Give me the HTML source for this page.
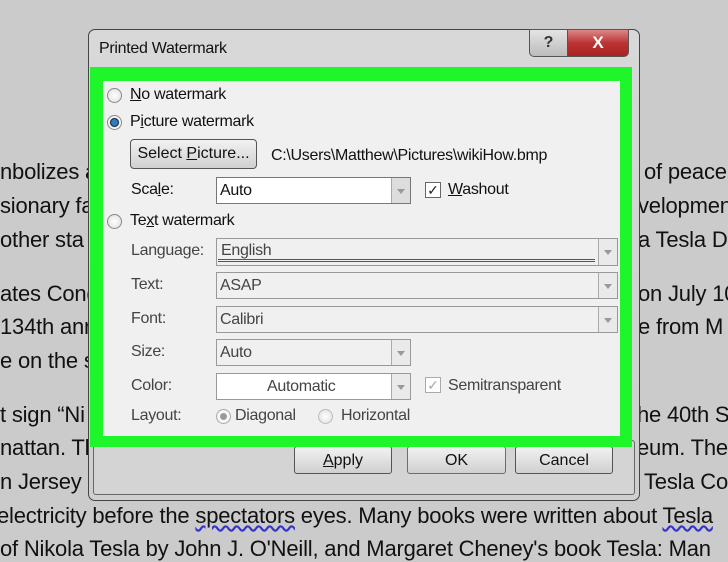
<!DOCTYPE html>
<html><head><meta charset="utf-8"><style>
*{margin:0;padding:0;box-sizing:border-box}
body{width:728px;height:546px;overflow:hidden;background:#cbcbcb;position:relative;font-family:"Liberation Sans",sans-serif;color:#111}
.bl{position:absolute;font-size:22px;white-space:nowrap;letter-spacing:-0.2px;line-height:26px;left:0}
.R{left:644px}
.dlg{position:absolute;left:88px;top:29px;width:552px;height:472px;border:1px solid #444;border-radius:7px;background:linear-gradient(#d8d8d8,#cfcfcf)}
.t{position:absolute;font-size:16px;white-space:nowrap;color:#111;letter-spacing:-0.3px}
.g{position:absolute;left:90px;top:67px;width:542px;height:380px;background:#1ff52b}
.pan{position:absolute;left:103px;top:81px;width:517px;height:355px;background:#f0f0f0}
.rad{position:absolute;width:15px;height:15px;border-radius:50%;border:1px solid #888;background:radial-gradient(#fff,#ddd)}
.cb{position:absolute;width:16px;height:16px;border:1px solid #666;background:#fff;font-size:14px;line-height:14px;text-align:center;color:#223}
.combo{position:absolute;border:1px solid #999;background:#f0f0f0}
.arr{position:absolute;right:0;top:0;bottom:0;width:19px;border-left:1px solid #aaa;background:#eaeaea}
.arr:after{content:"";position:absolute;left:5px;top:50%;margin-top:-2px;border-left:4px solid transparent;border-right:4px solid transparent;border-top:5px solid #999}
.btn{position:absolute;border:1px solid #555;border-radius:3px;background:linear-gradient(#f2f2f2,#d0d0d0);font-size:16px;text-align:center}
u{text-decoration:underline}
</style></head><body>
<div class="bl" style="top:159px">nbolizes a</div>
<div class="bl" style="top:193px">sionary fa</div>
<div class="bl" style="top:227px">other sta</div>
<div class="bl" style="top:281px">ates Cong</div>
<div class="bl" style="top:314px">134th ann</div>
<div class="bl" style="top:348px">e on the s</div>
<div class="bl" style="top:402px">t sign “Ni</div>
<div class="bl" style="top:435px">nattan. Th</div>
<div class="bl" style="top:469px">n Jersey C</div>
<div class="bl R" style="top:159px">of peace</div>
<div class="bl R" style="top:193px;left:638px">velopment</div>
<div class="bl R" style="top:227px;left:638px">a Tesla Day</div>
<div class="bl R" style="top:281px;left:638px">on July 10</div>
<div class="bl R" style="top:314px;left:638px">e from M</div>
<div class="bl R" style="top:402px;left:637px">he 40th S</div>
<div class="bl R" style="top:435px;left:637px">eum. The</div>
<div class="bl R" style="top:469px">Tesla Coi</div>
<div class="bl" style="top:503px;left:-3px">electricity before the <u style="text-decoration-style:wavy;text-decoration-color:#33c">spectators</u> eyes. Many books were written about <u style="text-decoration-style:wavy;text-decoration-color:#33c">Tesla</u></div>
<div class="bl" style="top:536px;left:0">of Nikola Tesla by John J. O'Neill, and Margaret Cheney's book Tesla: Man</div>

<div class="dlg"></div>
<div class="t" style="left:99px;top:40px">Printed Watermark</div>
<div style="position:absolute;left:529px;top:29px;width:39px;height:28px;border:1px solid #555;border-radius:0 0 0 5px;background:linear-gradient(#e4e4e4,#bcbcbc);text-align:center;font:bold 16px 'Liberation Sans';line-height:26px;color:#333">?</div>
<div style="position:absolute;left:567px;top:29px;width:62px;height:28px;border:1px solid #555;border-radius:0 0 5px 0;background:linear-gradient(#d88,#b33 50%,#a22);text-align:center;font:bold 17px 'Liberation Sans';line-height:26px;color:#fff">X</div>
<div style="position:absolute;left:93px;top:440px;width:542px;height:55px;border:1px solid #666;border-radius:3px;background:#d4d4d4"></div>
<div class="btn" style="left:294px;top:446px;width:98px;height:28px;line-height:28px"><u>A</u>pply</div>
<div class="btn" style="left:407px;top:446px;width:99px;height:28px;line-height:28px;border-color:#3a7ab0">OK</div>
<div class="btn" style="left:515px;top:446px;width:98px;height:28px;line-height:28px">Cancel</div>
<div class="g"></div>
<div class="pan"></div>

<div class="rad" style="left:107px;top:88px"></div>
<div class="t" style="left:130px;top:86px"><u>N</u>o watermark</div>
<div class="rad" style="left:107px;top:115px;background:radial-gradient(#2a7fc0 0 3px,#113 4px,#fff 5px,#ddd)"></div>
<div class="t" style="left:130px;top:113px">P<u>i</u>cture watermark</div>
<div class="btn" style="left:130px;top:139px;width:127px;height:30px;line-height:28px;border-radius:4px">Select <u>P</u>icture...</div>
<div class="t" style="left:271px;top:147px">C:\Users\Matthew\Pictures\wikiHow.bmp</div>
<div class="t" style="left:131px;top:181px">Sca<u>l</u>e:</div>
<div class="combo" style="left:216px;top:177px;width:195px;height:27px;background:#fff;border-color:#777"><div class="arr" style="background:#ddd"></div><span class="t" style="left:3px;top:4px">Auto</span></div>
<div class="cb" style="left:425px;top:182px">✓</div>
<div class="t" style="left:448px;top:181px"><u>W</u>ashout</div>
<div class="rad" style="left:107px;top:214px"></div>
<div class="t" style="left:130px;top:212px">Te<u>x</u>t watermark</div>

<div class="t" style="left:131px;top:242px;color:#444">Language:</div>
<div class="combo" style="left:216px;top:238px;width:402px;height:28px"><div class="arr"></div><span class="t" style="left:4px;top:3px;color:#444">English</span><div style="position:absolute;left:1px;right:22px;bottom:3px;height:3px;border-top:1px solid #555;border-bottom:1px solid #555"></div></div>
<div class="t" style="left:131px;top:276px;color:#444">Text:</div>
<div class="combo" style="left:216px;top:272px;width:402px;height:27px"><div class="arr"></div><span class="t" style="left:3px;top:4px;color:#444">ASAP</span></div>
<div class="t" style="left:131px;top:310px;color:#444">Font:</div>
<div class="combo" style="left:216px;top:306px;width:402px;height:27px"><div class="arr"></div><span class="t" style="left:3px;top:4px;color:#444">Calibri</span></div>
<div class="t" style="left:131px;top:343px;color:#444">Size:</div>
<div class="combo" style="left:216px;top:339px;width:195px;height:27px"><div class="arr"></div><span class="t" style="left:3px;top:4px;color:#444">Auto</span></div>
<div class="t" style="left:131px;top:377px;color:#444">Color:</div>
<div class="combo" style="left:216px;top:373px;width:195px;height:27px;background:#fff"><div class="arr"></div><span class="t" style="left:50px;top:4px;color:#444">Automatic</span></div>
<div class="cb" style="left:425px;top:377px;color:#aaa;border-color:#aaa">✓</div>
<div class="t" style="left:448px;top:377px;color:#444">Semitransparent</div>
<div class="t" style="left:131px;top:407px;color:#444">Layout:</div>
<div class="rad" style="left:216px;top:409px;border-color:#aaa;background:radial-gradient(#999 0 3px,#fff 4px,#ddd)"></div>
<div class="t" style="left:235px;top:407px;color:#444">Diagonal</div>
<div class="rad" style="left:318px;top:409px;border-color:#bbb"></div>
<div class="t" style="left:341px;top:407px;color:#444">Horizontal</div>
</body></html>
